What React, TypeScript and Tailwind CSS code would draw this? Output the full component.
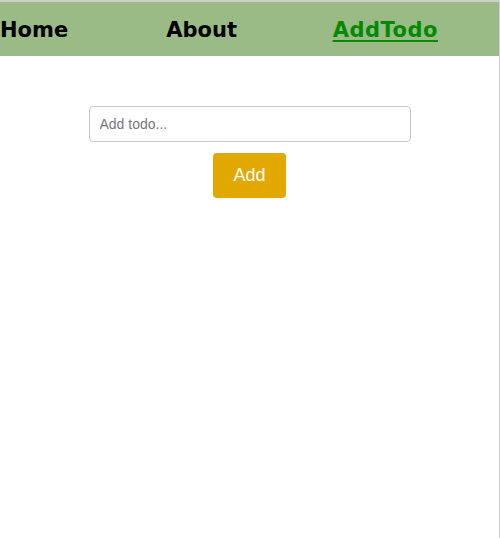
import React from "react";

export default function App() {
  return (
    <div className="h-[538px] w-[500px] border-t-2 border-r border-[#cfcfcf] bg-white">
      <nav className="grid h-[54px] grid-cols-3 items-center bg-[#9bbb86] pt-[4px] font-['DejaVu_Sans',sans-serif] text-[21px] font-bold text-black">
        <a className="block">Home</a>
        <a className="block">About</a>
        <a className="block tracking-[0.5px] text-[#008a00] underline decoration-2 underline-offset-[3px]">AddTodo</a>
      </nav>
      <div className="flex flex-col items-center pt-[50px] font-['Liberation_Sans',Arial,sans-serif]">
        <input
          className="h-[36px] w-[322px] rounded-[4px] border border-[#c8c8c8] px-[10px] text-[14px] text-black placeholder:text-[#777] outline-none"
          placeholder="Add todo..."
        />
        <button className="mt-[11px] h-[45px] w-[73px] rounded-[4px] bg-[#e1a800] text-[18px] text-white">
          Add
        </button>
      </div>
    </div>
  );
}
